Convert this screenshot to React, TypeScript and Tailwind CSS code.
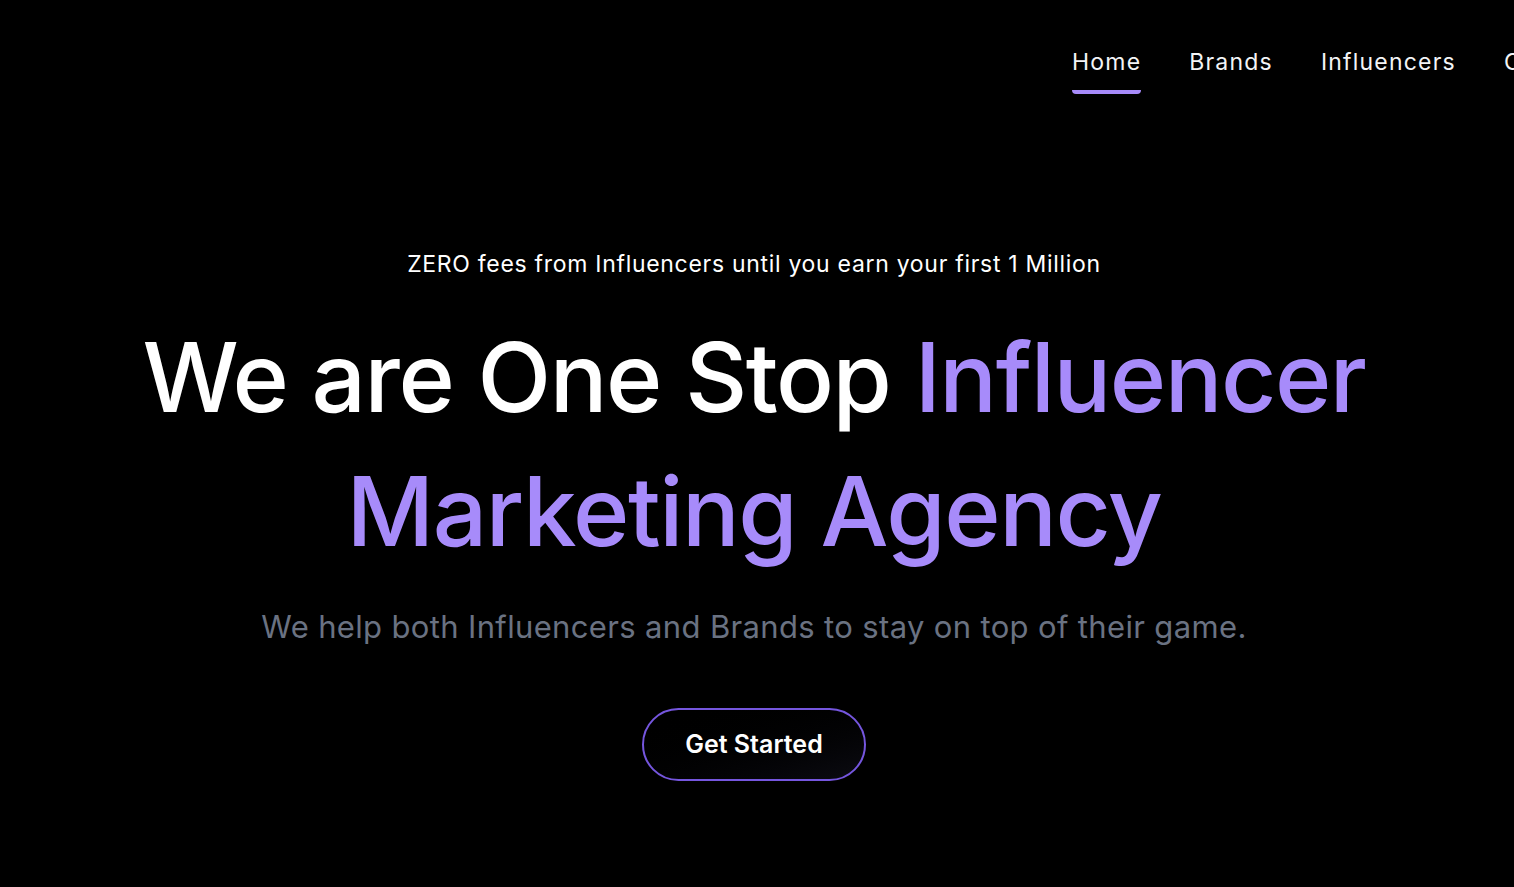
const navItems = ["Home", "Brands", "Influencers", "Contact"];

export default function App() {
  return (
    <div
      className="min-h-[887px] w-full overflow-hidden bg-black text-white"
      style={{ fontFamily: "Inter, 'Noto Sans', sans-serif" }}
    >
      {/* Navbar */}
      <header className="flex w-full overflow-hidden pt-[46px]">
        <div className="w-[1072px] shrink-0" />
        <nav className="flex shrink-0 gap-12 whitespace-nowrap">
          {navItems.map((item, index) => (
            <a
              key={item}
              href="#"
              className="flex flex-col text-[23px] leading-[32px] tracking-[1.2px] text-gray-100"
            >
              {item}
              <span
                className={`mt-[12px] h-[4px] rounded-b-full ${
                  index === 0 ? "bg-[#a78bfa]" : "bg-transparent"
                }`}
              />
            </a>
          ))}
        </nav>
      </header>

      {/* Hero */}
      <section className="flex flex-col items-center pt-[154px] pr-[6px] text-center">
        <p className="text-[23px] leading-[32px] tracking-[0.7px] text-white">
          ZERO fees from Influencers until you earn your first 1 Million
        </p>
        <h1 className="mt-[30px] text-[96px] font-medium leading-[134px] tracking-[-0.015em]">
          We are One Stop{" "}
          <span className="text-[#a78bfa]">Influencer</span>
          <br />
          <span className="text-[#a78bfa]">Marketing Agency</span>
        </h1>
        <p className="mt-[29px] text-[31px] leading-[40px] tracking-[0.35px] text-gray-500">
          We help both Influencers and Brands to stay on top of their game.
        </p>
        <button className="mt-[61px] h-[73px] w-[224px] rounded-full border-2 border-[#7556de] bg-gradient-to-br from-black to-[#0c0c12] text-[25px] font-semibold text-white">
          Get Started
        </button>
      </section>
    </div>
  );
}
